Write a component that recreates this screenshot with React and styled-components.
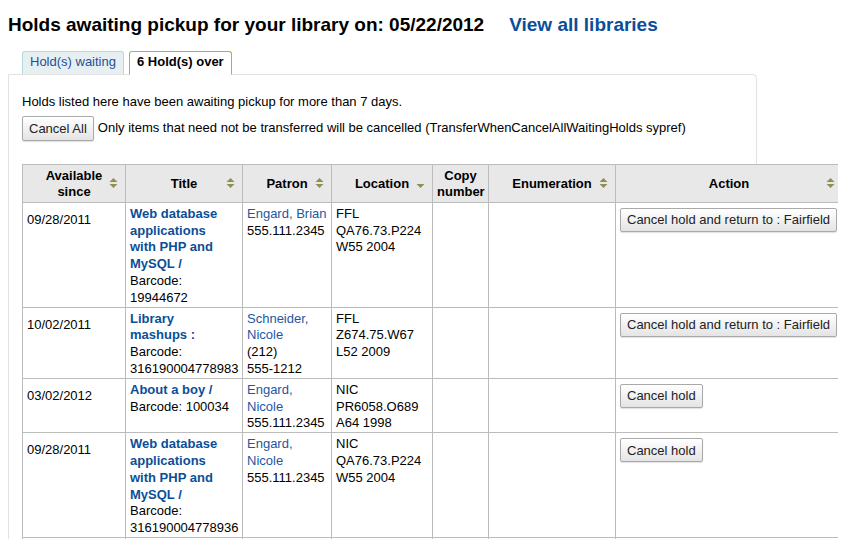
import { createGlobalStyle, styled } from "styled-components";

const GlobalStyle = createGlobalStyle`
  body {
    margin: 8px;
    font-family: "Liberation Sans", Arial, Helvetica, sans-serif;
    font-size: 13px;
    line-height: 1.3;
    color: #000;
    background: #fff;
  }
`;

const LINK = "#0b4e98";

const Heading = styled.h1`
  margin: 6px 0 0;
  font-size: 19px;
  font-weight: bold;
  line-height: 22px;
  white-space: nowrap;
`;
const HeadingLink = styled.a`
  margin-left: 25px;
  color: ${LINK};
  text-decoration: none;
`;
const TabBar = styled.ul`
  display: flex;
  gap: 5px;
  margin: 15px 0 0;
  padding: 0 0 0 14px;
  list-style: none;
  position: relative;
  z-index: 1;
`;
const Tab = styled.li`
  padding: 2px 7px 3px;
  border: 1px solid ${(p) => (p.$active ? "#8cc63f" : "#b9d8d9")};
  border-bottom: ${(p) => (p.$active ? "1px solid #fff" : "none")};
  margin-bottom: -1px;
  border-radius: 3px 3px 0 0;
  background: ${(p) => (p.$active ? "#fff" : "#e6f0f2")};
  color: ${(p) => (p.$active ? "#000" : "#1f4f95")};
  font-weight: ${(p) => (p.$active ? "bold" : "normal")};
  height: 17px;
`;
const Panel = styled.div`
  width: 749px;
  min-height: 480px;
  border: 1px solid #e2e2e2;
  border-radius: 0 4px 0 0;
  padding: 19px 0 0 13px;
  box-sizing: border-box;
`;
const Note = styled.p`
  margin: 0 0 5px;
`;
const ActionRow = styled.div`
  display: flex;
  align-items: center;
  gap: 4px;
  margin-bottom: 23px;
`;
const Button = styled.button`
  font-family: inherit;
  font-size: 13px;
  color: #222;
  height: 25px;
  padding: 0 6px;
  border: 1px solid #a9a9a9;
  border-radius: 2px;
  background: linear-gradient(#ffffff, #e4e4e4);
  box-shadow: 0 1px 1px rgba(0, 0, 0, 0.12);
  white-space: nowrap;
  cursor: pointer;
`;
const Table = styled.table`
  width: 820px;
  border-collapse: collapse;
  table-layout: fixed;
  background: #fff;
  position: relative;
`;
const Th = styled.th`
  position: relative;
  height: 33px;
  background: #e8e8e8;
  border: 1px solid #bcbcbc;
  padding: 3px 4px 1px;
  font-weight: bold;
  text-align: center;
  line-height: 16px;
`;
const Td = styled.td`
  border: 1px solid #bcbcbc;
  padding: ${(p) => (p.$date ? "9px" : "3px")} ${(p) => (p.$title ? "11px" : "4px")} 0 4px;
  vertical-align: top;
  line-height: 16.8px;
`;
const SortIcon = styled.svg`
  position: absolute;
  right: 7px;
  top: 50%;
  transform: translateY(-50%);
`;
const TitleLink = styled.a`
  display: block;
  color: ${LINK};
  font-weight: bold;
  text-decoration: none;
`;
const PatronLink = styled.a`
  display: block;
  color: #1c58a2;
  text-decoration: none;
`;
const NoWrap = styled.span`
  white-space: nowrap;
`;
const CellButton = styled(Button)`
  height: 24px;
  margin-top: 2px;
`;

function Sort({ down }) {
  return (
    <SortIcon width="9" height="12" viewBox="0 0 9 12">
      {!down && <polygon points="0.5,5 4.5,1 8.5,5" fill="#8e8f50" />}
      <polygon points="0.5,7 4.5,11 8.5,7" fill="#8e8f50" />
    </SortIcon>
  );
}

const holds = [
  {
    date: "09/28/2011",
    title: "Web database applications with PHP and MySQL /",
    barcode: "19944672",
    patron: "Engard, Brian",
    phone: "555.111.2345",
    branch: "FFL",
    call: ["QA76.73.P224", "W55 2004"],
    action: "Cancel hold and return to : Fairfield",
  },
  {
    date: "10/02/2011",
    title: "Library mashups :",
    barcode: "316190004778983",
    patron: "Schneider, Nicole",
    phone: "(212) 555-1212",
    branch: "FFL",
    call: ["Z674.75.W67", "L52 2009"],
    action: "Cancel hold and return to : Fairfield",
  },
  {
    date: "03/02/2012",
    title: "About a boy /",
    barcode: "100034",
    patron: "Engard, Nicole",
    phone: "555.111.2345",
    branch: "NIC",
    call: ["PR6058.O689", "A64 1998"],
    action: "Cancel hold",
  },
  {
    date: "09/28/2011",
    title: "Web database applications with PHP and MySQL /",
    barcode: "316190004778936",
    patron: "Engard, Nicole",
    phone: "555.111.2345",
    branch: "NIC",
    call: ["QA76.73.P224", "W55 2004"],
    action: "Cancel hold",
  },
  {
    date: "11/14/2011",
    title: "Koha 3.4 /",
    barcode: "316190004778901",
    patron: "Engard, Brian",
    phone: "555.111.2345",
    branch: "FFL",
    call: ["Z678.9", "E54 2011"],
    action: "Cancel hold",
  },
];

function Phone({ value }) {
  const parts = value.split(" ");
  return parts.map((part, j) => (
    <span key={j}>
      {j > 0 && " "}
      <NoWrap>{part}</NoWrap>
    </span>
  ));
}

function App() {
  return (
    <>
      <GlobalStyle />
      <Heading>
        Holds awaiting pickup for your library on: 05/22/2012
        <HeadingLink href="#">View all libraries</HeadingLink>
      </Heading>
      <TabBar>
        <Tab>Hold(s) waiting</Tab>
        <Tab $active>6 Hold(s) over</Tab>
      </TabBar>
      <Panel>
        <Note>Holds listed here have been awaiting pickup for more than 7 days.</Note>
        <ActionRow>
          <Button>Cancel All</Button>
          <span>Only items that need not be transferred will be cancelled (TransferWhenCancelAllWaitingHolds sypref)</span>
        </ActionRow>
        <Table>
          <colgroup>
            <col style={{ width: 103 }} />
            <col style={{ width: 117 }} />
            <col style={{ width: 89 }} />
            <col style={{ width: 101 }} />
            <col style={{ width: 56 }} />
            <col style={{ width: 127 }} />
            <col style={{ width: 227 }} />
          </colgroup>
          <thead>
            <tr>
              <Th>Available<br />since<Sort /></Th>
              <Th>Title<Sort /></Th>
              <Th>Patron<Sort /></Th>
              <Th>Location<Sort down /></Th>
              <Th>Copy<br />number</Th>
              <Th>Enumeration<Sort /></Th>
              <Th>Action<Sort /></Th>
            </tr>
          </thead>
          <tbody>
            {holds.map((h, i) => (
              <tr key={i}>
                <Td $date>{h.date}</Td>
                <Td $title>
                  <TitleLink href="#">{h.title}</TitleLink>
                  Barcode: {h.barcode}
                </Td>
                <Td>
                  <PatronLink href="#">{h.patron}</PatronLink>
                  <Phone value={h.phone} />
                </Td>
                <Td>
                  {h.branch}
                  <br />
                  {h.call[0]}
                  <br />
                  {h.call[1]}
                </Td>
                <Td />
                <Td />
                <Td>
                  <CellButton>{h.action}</CellButton>
                </Td>
              </tr>
            ))}
          </tbody>
        </Table>
      </Panel>
    </>
  );
}

export default App;
